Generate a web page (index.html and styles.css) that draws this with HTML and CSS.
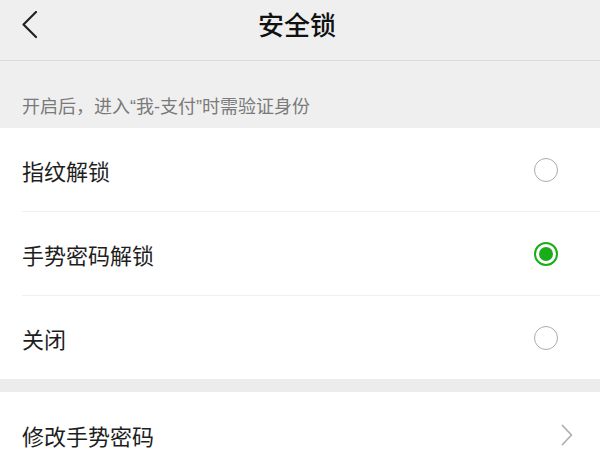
FILE: index.html
```html
<!DOCTYPE html>
<html lang="zh-CN">
<head>
<meta charset="utf-8">
<link rel="stylesheet" href="styles.css">
</head>
<body>
<div class="page">
  <header class="topbar">
    <svg class="back" width="16" height="28" viewBox="0 0 16 28"><polyline points="14,1 1.5,13.5 14,26" fill="none" stroke="#222" stroke-width="2.2" stroke-linecap="round" stroke-linejoin="round"/></svg>
    <div class="title">安全锁</div>
  </header>
  <div class="hint">开启后，进入<span class="q">“</span>我<span class="q">-</span>支付<span class="q">”</span>时需验证身份</div>
  <ul class="list">
    <li class="row"><span class="label">指纹解锁</span><span class="radio"></span></li>
    <li class="row"><span class="label">手势密码解锁</span><span class="radio on"></span></li>
    <li class="row"><span class="label">关闭</span><span class="radio"></span></li>
  </ul>
  <div class="gap"></div>
  <ul class="list">
    <li class="row link"><span class="label">修改手势密码</span>
      <svg class="chev" width="12" height="22" viewBox="0 0 12 22"><polyline points="1.5,1.5 10.5,11 1.5,20.5" fill="none" stroke="#b0b0b0" stroke-width="1.8" stroke-linecap="round" stroke-linejoin="round"/></svg>
    </li>
  </ul>
</div>
</body>
</html>
```
FILE: styles.css
```css
* { box-sizing: border-box; margin: 0; padding: 0; }
html, body { width: 600px; height: 451px; overflow: hidden; }
body { background: #efefef; font-family: "Noto Sans CJK SC", "Noto Sans", sans-serif; color: #1a1a1a; }
.page { display: flex; flex-direction: column; }
.topbar {
  position: relative;
  height: 61px;
  background: #efefef;
  border-bottom: 1px solid #dadada;
  display: flex;
  justify-content: center;
  align-items: flex-start;
}
.back { position: absolute; left: 22px; top: 11px; }
.title { font-size: 26px; line-height: 30px; margin-top: 9px; margin-right: 6px; font-weight: 500; color: #111; }
.hint {
  height: 67px;
  padding: 32px 22px 0;
  font-size: 18px;
  line-height: 24px;
  color: #7a7a7a;
}
.q { font-family: "Liberation Sans", sans-serif; }
.list { list-style: none; background: #fff; }
.row {
  height: 84px;
  margin-left: 22px;
  padding-right: 42px;
  display: flex;
  align-items: center;
  justify-content: space-between;
  border-bottom: 1px solid #efefef;
}
.row:last-child { border-bottom: none; height: 83px; }
.label { font-size: 22px; line-height: 30px; color: #1e1e1e; margin-top: 1px; }
.radio {
  width: 24px; height: 24px;
  border-radius: 50%;
  border: 1.6px solid #ababab;
  display: flex; align-items: center; justify-content: center;
}
.radio.on { border: 2.2px solid #1aad19; }
.radio.on::after { content: ""; width: 14px; height: 14px; border-radius: 50%; background: #1aad19; }
.gap { height: 13px; background: #ececec; }
.row.link { padding-right: 27px; height: 84px; }
.chev { margin-top: 2px; }
```
